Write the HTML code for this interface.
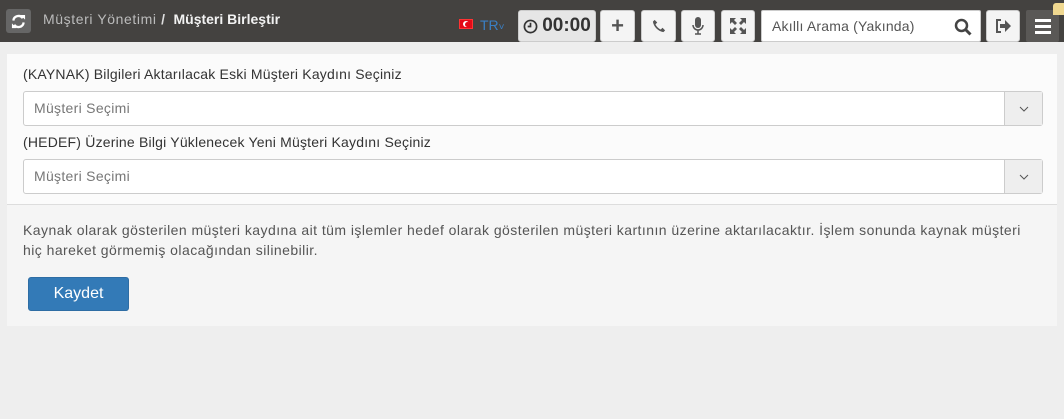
<!DOCTYPE html>
<html><head><meta charset="utf-8"><style>
*{box-sizing:border-box;margin:0;padding:0}
body{width:1064px;height:419px;overflow:hidden;background:#eeeeee;font-family:"Liberation Sans",sans-serif;position:relative}
.top{position:absolute;left:0;top:0;width:1064px;height:42px;background:#444240}
.abs{position:absolute}
.btn{position:absolute;top:10px;height:32px;background:#f4f4f4;border:1px solid #ccc;border-radius:3px;display:flex;align-items:center;justify-content:center;color:#555}
.panel{position:absolute;left:7px;top:54px;width:1050px;height:272px;background:#f5f5f5}
.pt{position:absolute;left:0;top:0;width:1050px;height:151px;background:#fbfbfb;border-bottom:1px solid #ddd}
.lbl{position:absolute;left:16px;font-size:14px;letter-spacing:0.2px;color:#333}
.sel{position:absolute;left:16px;width:1020px;height:35px;background:#fff;border:1px solid #ccc;border-radius:3px;font-size:14px;letter-spacing:0.3px;color:#777;padding:8px 10px}
.sel .ch{position:absolute;right:0;top:0;width:38px;height:33px;background:#eee;border-left:1px solid #ccc;display:flex;align-items:center;justify-content:center}
</style></head><body>
<div class="top">
 <div class="abs" style="left:6px;top:9px;width:25px;height:24px;background:#666;border-radius:3px;display:flex;align-items:center;justify-content:center"><svg width="15" height="15" viewBox="0 0 16 16"><path d="M2.5 7A5.5 5.5 0 0 1 12.5 4.5" stroke="#fff" stroke-width="2.4" fill="none"/><path d="M10 1h5v5z" fill="#fff"/><path d="M13.5 9A5.5 5.5 0 0 1 3.5 11.5" stroke="#fff" stroke-width="2.4" fill="none"/><path d="M6 15H1v-5z" fill="#fff"/></svg></div>
 <div class="abs" style="left:43px;top:11px;font-size:14px;letter-spacing:0.6px;color:#bbb">Müşteri Yönetimi <span style="color:#ddd;font-weight:bold;letter-spacing:0">/</span> <span style="color:#f2f2f2;font-weight:bold;margin-left:4px;letter-spacing:0">Müşteri Birleştir</span></div>
 <div class="abs" style="left:459px;top:19px;width:14px;height:10px;background:#e30a17;border:1px solid #f33"><div class="abs" style="left:3px;top:1px;width:6px;height:6px;border-radius:50%;background:#fff"></div><div class="abs" style="left:4.5px;top:1.5px;width:5px;height:5px;border-radius:50%;background:#e30a17"></div></div>
 <div class="abs" style="left:480px;top:17px;font-size:14px;color:#3a7fc4">TR<span style="font-size:10px">˅</span></div>
 <div class="btn" style="left:518px;width:78px;font-size:19px;font-weight:bold;color:#333;background:#e6e6e6"><svg width="15" height="15" viewBox="0 0 16 16" style="margin-right:4px"><circle cx="8" cy="8" r="6.5" stroke="#333" stroke-width="1.8" fill="none"/><path d="M8 4v4H5" stroke="#333" stroke-width="1.8" fill="none"/></svg>00:00</div>
 <div class="btn" style="left:600px;width:35px;font-size:22px;font-weight:bold">+</div>
 <div class="btn" style="left:641px;width:35px"><svg width="14" height="14" viewBox="0 0 16 16"><path d="M3 1l3 3-2 2c1 2.5 3.5 5 6 6l2-2 3 3-2 2C7 14 2 9 1 3z" fill="#555"/></svg></div>
 <div class="btn" style="left:681px;width:34px"><svg width="12" height="18" viewBox="0 0 12 18"><rect x="3" y="0" width="6" height="11" rx="3" fill="#555"/><path d="M1 8a5 5 0 0 0 10 0M6 13v4M3 17h6" stroke="#555" stroke-width="1.5" fill="none"/></svg></div>
 <div class="btn" style="left:721px;width:34px"><svg width="16" height="16" viewBox="0 0 16 16" fill="#555"><path d="M0 0h6L4 2l3 3-2 2-3-3-2 2zM16 0v6l-2-2-3 3-2-2 3-3-2-2zM0 16v-6l2 2 3-3 2 2-3 3 2 2zM16 16h-6l2-2-3-3 2-2 3 3 2-2z"/></svg></div>
 <div class="abs" style="left:761px;top:10px;width:220px;height:32px;background:#fff;border:1px solid #ccc;border-radius:2px;font-size:14px;letter-spacing:0.2px;color:#555;padding:7px 10px">Akıllı Arama (Yakında)
  <svg class="abs" style="right:8px;top:7px" width="18" height="18" viewBox="0 0 18 18"><circle cx="7.5" cy="7.5" r="5.5" stroke="#444" stroke-width="2.5" fill="none"/><path d="M11.5 11.5l5 5" stroke="#444" stroke-width="3"/></svg></div>
 <div class="btn" style="left:986px;width:34px"><svg width="16" height="14" viewBox="0 0 16 14"><path d="M6 1H2v12h4" stroke="#555" stroke-width="2" fill="none"/><path d="M5 5h5V1l6 6-6 6V9H5z" fill="#555"/></svg></div>
 <div class="abs" style="left:1026px;top:10px;width:33px;height:32px;background:#5a5856;border-radius:2px;display:flex;flex-direction:column;justify-content:center;align-items:center;gap:3px"><div style="width:16px;height:3px;background:#fff"></div><div style="width:16px;height:3px;background:#fff"></div><div style="width:16px;height:3px;background:#fff"></div></div>
 <div class="abs" style="left:1053px;top:3px;width:11px;height:12px;background:#f0d890;border-radius:3px 0 0 0"></div>
</div>
<div class="panel">
 <div class="pt">
  <div class="lbl" style="top:12px">(KAYNAK) Bilgileri Aktarılacak Eski Müşteri Kaydını Seçiniz</div>
  <div class="sel" style="top:37px">Müşteri Seçimi<div class="ch"><svg width="10" height="6"><path d="M1 1l4 4 4-4" stroke="#555" fill="none"/></svg></div></div>
  <div class="lbl" style="top:80px">(HEDEF) Üzerine Bilgi Yüklenecek Yeni Müşteri Kaydını Seçiniz</div>
  <div class="sel" style="top:105px">Müşteri Seçimi<div class="ch"><svg width="10" height="6"><path d="M1 1l4 4 4-4" stroke="#555" fill="none"/></svg></div></div>
 </div>
 <div class="abs" style="left:16px;top:166px;width:1015px;font-size:14px;letter-spacing:0.45px;color:#555;line-height:20px">Kaynak olarak gösterilen müşteri kaydına ait tüm işlemler hedef olarak gösterilen müşteri kartının üzerine aktarılacaktır. İşlem sonunda kaynak müşteri hiç hareket görmemiş olacağından silinebilir.</div>
 <div class="abs" style="left:21px;top:223px;width:101px;height:34px;background:#337ab7;border:1px solid #2e6da4;border-radius:3px;color:#fff;font-size:16px;text-align:center;line-height:32px">Kaydet</div>
</div>
</body></html>
